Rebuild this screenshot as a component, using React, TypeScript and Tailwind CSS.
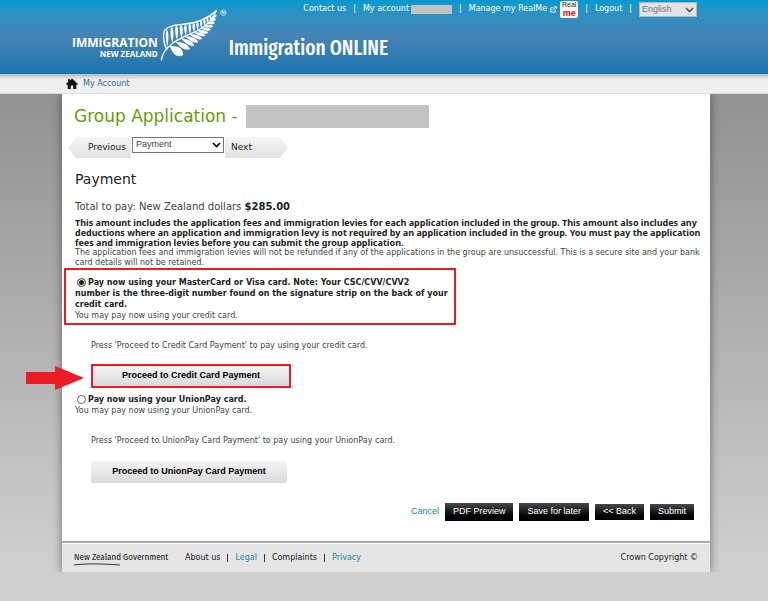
import React, { useState } from 'react';

const verdana = "font-['Verdana','DejaVu_Sans',sans-serif]";
const arial = "font-['Arial','Liberation_Sans',sans-serif]";

// === Logo ===
// Each frond: [x1, y1, x2, y2, width]
const upperFronds = [
  [37, 126, 36, 72, 8],
  [52, 114, 50, 64, 9],
  [66, 106, 64, 60, 9],
  [80, 99, 78, 58, 9],
  [92, 93, 91, 57, 8],
  [105, 87, 104, 55, 8],
  [117, 81, 116, 53, 8],
  [128, 75, 127, 50, 7],
  [139, 69, 138, 46, 7],
  [149, 62, 148, 42, 7],
  [158, 54, 157, 37, 6],
  [167, 45, 166, 31, 6],
];

const lowerFronds = [
  [44, 123, 84, 151, 25],
  [62, 110, 105, 133, 16],
  [78, 100, 118, 122, 13],
  [91, 94, 130, 112, 12],
  [103, 88, 142, 102, 11],
  [115, 82, 152, 92, 10],
  [126, 77, 160, 83, 10],
  [137, 70, 168, 74, 9],
  [147, 63, 175, 64, 9],
  [156, 55, 180, 53, 9],
  [164, 47, 183, 42, 9],
  [172, 38, 185, 31, 8],
];

function leaf([x1, y1, x2, y2, w]: number[]) {
  const dx = x2 - x1;
  const dy = y2 - y1;
  const len = Math.hypot(dx, dy);
  const nx = (-dy / len) * w;
  const ny = (dx / len) * w;
  const mx = x1 + dx * 0.7;
  const my = y1 + dy * 0.7;
  return `M${x1} ${y1} Q${mx + nx} ${my + ny} ${x2} ${y2} Q${mx - nx} ${my - ny} ${x1} ${y1} Z`;
}

function FernLogo() {
  return (
    <svg viewBox="15 9 204 159" className="h-[53px] w-[68px]" role="img" aria-label="Silver fern">
      <path
        d="M19 166 C21 145 32 130 55 113 C80 97 105 88 130 75 C155 62 174 42 184 17"
        fill="none"
        stroke="white"
        strokeWidth="4"
      />
      <path
        d="M34 131 C26 118 23 88 29 76 C36 66 55 60 80 58 C120 56 158 42 185 16"
        fill="none"
        stroke="white"
        strokeWidth="4"
      />
      <g fill="white">
        {upperFronds.map((f, i) => <path key={i} d={leaf(f)} />)}
        {lowerFronds.map((f, i) => <path key={i} d={leaf(f)} />)}
      </g>
      <g fill="none" stroke="white" strokeWidth="2">
        <circle cx="205" cy="23" r="8" />
        <path d="M200 20 H204 M202 20 V26 M205 26 V20 L207.5 24 L210 20 V26" />
      </g>
    </svg>
  );
}

// === Icons ===
function ExternalIcon() {
  return (
    <svg viewBox="0 0 8 8" className="size-[7px]" fill="none" stroke="white" aria-hidden="true">
      <path d="M4 2 H1 V7 H6 V4.5 M3 5 L7 1 M4.5 0.8 H7.2 V3.5" />
    </svg>
  );
}

function HomeIcon() {
  return (
    <svg viewBox="0 0 12 11" className="h-[11px] w-3" fill="#111" aria-hidden="true">
      <path d="M6 0.5 L12 6 L11 7 L10.3 6.4 V11 H7.2 V7.5 H4.8 V11 H1.7 V6.4 L1 7 L0 6 L2 4.1 V1 H3.7 V2.6 Z" />
    </svg>
  );
}

function Chevron({ className }: { className: string }) {
  return (
    <svg
      viewBox="0 0 9 6"
      className={`pointer-events-none absolute top-[5px] right-[3px] h-[6px] w-[9px] ${className}`}
      fill="none"
      stroke="currentColor"
      strokeWidth="1.6"
      aria-hidden="true"
    >
      <path d="M1 1 L4.5 4.5 L8 1" />
    </svg>
  );
}

function Arrow() {
  return (
    <svg viewBox="0 0 58 24" className="absolute top-[2px] -left-[65px] h-6 w-[58px]" fill="#ed1c24" aria-hidden="true">
      <path d="M0 6 H29 V0 L58 12 L29 24 V18 H0 Z" />
    </svg>
  );
}

// === Header ===
function Header() {
  return (
    <header className="h-[74px] bg-linear-to-b from-[#0099cf] via-[#4583b3] to-[#1674af] pr-[71px] pl-[72px] text-white">
      <nav className="flex h-[18px] items-center justify-end text-[8px] whitespace-nowrap">
        <a href="#contact">Contact us</a>
        <span className="px-[7px]">|</span>
        <a href="#account">My account</a>
        <span className="ml-[2px] h-[9px] w-[41px] bg-[#c3c3c3]" />
        <span className="px-[7px]">|</span>
        <a href="#realme" className="flex items-center gap-[3px]">
          Manage my RealMe
          <ExternalIcon />
          <span className={`flex h-[17px] w-[18px] flex-col items-center rounded-xs bg-white text-[#222] ${arial}`}>
            <span className="text-[7px] leading-[8px]">Real</span>
            <span className="text-[9px] leading-[8px] font-bold text-[#f00000]">me</span>
          </span>
        </a>
        <span className="px-[7px]">|</span>
        <a href="#logout">Logout</a>
        <span className="px-[7px]">|</span>
        <div className="relative flex">
          <select
            aria-label="Language"
            className={`h-[15px] w-[58px] appearance-none border border-[#b5b5b5] bg-[#e3e3e3] pl-[2px] text-[9px] text-[#777] ${arial}`}
          >
            <option>English</option>
          </select>
          <Chevron className="text-[#555]" />
        </div>
      </nav>
      <div className="flex items-start">
        <div className="pt-[18px] text-right font-['Open_Sans','Noto_Sans',sans-serif] font-bold">
          <div className="text-[12px] leading-[13px]">IMMIGRATION</div>
          <div className="text-[8px] leading-[9px]">NEW ZEALAND</div>
        </div>
        <div className="-mt-[10px] ml-[2px]">
          <FernLogo />
        </div>
        <div className="pt-4 pl-px font-['Fira_Sans_Extra_Condensed','Fira_Sans_Condensed','Roboto_Condensed','Liberation_Sans_Narrow',sans-serif] text-[21px] leading-7 font-medium whitespace-nowrap">
          Immigration ONLINE
        </div>
      </div>
    </header>
  );
}

function StepNav() {
  return (
    <div className="-ml-[6px] flex items-start gap-px">
      <button className="h-[21px] w-[63px] bg-linear-to-b from-[#f5f5f5] to-[#e2e2e2] pr-[5px] text-right text-[9px] text-[#222] [clip-path:polygon(8px_0,100%_0,100%_100%,8px_100%,0_50%)]">
        Previous
      </button>
      <div className="relative flex">
        <select
          aria-label="Step"
          className={`h-4 w-[92px] appearance-none border border-[#777] bg-white pl-[3px] text-[9px] ${arial}`}
        >
          <option>Payment</option>
        </select>
        <Chevron className="text-black" />
      </div>
      <button className="h-[21px] w-[63px] bg-linear-to-b from-[#f5f5f5] to-[#e2e2e2] pl-[6px] text-left text-[9px] text-[#222] [clip-path:polygon(0_0,calc(100%-8px)_0,100%_50%,calc(100%-8px)_100%,0_100%)]">
        Next
      </button>
    </div>
  );
}

// === Payment options ===
function RadioOption({ id, checked, onSelect, note, children }: any) {
  return (
    <div className="text-[8px] leading-[11px]">
      <input
        id={id}
        type="radio"
        name="method"
        checked={checked}
        onChange={onSelect}
        className="mr-[2px] ml-[2px] size-[9px] appearance-none rounded-full border border-[#666] bg-white align-middle checked:bg-[#222] checked:shadow-[inset_0_0_0_1px_white]"
      />
      <label htmlFor={id} className="font-bold text-[#222]">{children}</label>
      <p>{note}</p>
    </div>
  );
}

const proceedStyle = `block bg-linear-to-b from-[#f5f5f5] to-[#dadada] text-[9px] font-bold text-black ${arial}`;
const darkStyle = `bg-linear-to-b from-[#4a4a4a] to-black px-2 text-[9px] text-white ${arial}`;

function Footer() {
  return (
    <footer className="flex h-[29px] items-center border-t border-white px-3 text-[8px] text-[#222]">
      <div className="relative w-[91px] font-['Fira_Sans_Condensed','Lato',sans-serif] text-[9px] whitespace-nowrap">
        New Zealand Government
        <svg viewBox="0 0 46 3" className="absolute -bottom-px left-0 h-[3px] w-[46px]" fill="none" stroke="#333" aria-hidden="true">
          <path d="M0 2 C12 0.5 25 0.5 46 2" />
        </svg>
      </div>
      <nav className="ml-5 flex items-center">
        <a href="#about">About us</a>
        <span className="mx-[7px] h-2 w-px bg-[#333]" />
        <a href="#legal" className="text-[#2483a8]">Legal</a>
        <span className="mx-[7px] h-2 w-px bg-[#333]" />
        <a href="#complaints">Complaints</a>
        <span className="mx-[7px] h-2 w-px bg-[#333]" />
        <a href="#privacy" className="text-[#2483a8]">Privacy</a>
      </nav>
      <span className="ml-auto">Crown Copyright ©</span>
    </footer>
  );
}

// === App Component ===
export default function App() {
  const [method, setMethod] = useState('card');

  return (
    <div className={`min-h-screen bg-linear-to-b from-[#868686] to-[#cfcfcf] to-[560px] text-[#444] ${verdana}`}>
      <Header />
      <div className="flex h-5 items-center gap-[5px] border-b border-[#dcdcdc] bg-linear-to-b from-[#bbb] to-[#efefef] to-30% px-[66px] text-[8px]">
        <HomeIcon />
        <a href="#home" className="text-[#1f7094]">My Account</a>
      </div>

      <div className="mr-[58px] ml-[62px] bg-[#e5e5e5] shadow-[0_0_9px_rgba(0,0,0,0.45)] [clip-path:inset(0_-12px_0_-40px)]">
        <main className="border-b-2 border-[#aaa] bg-white pr-[6px] pb-5 pl-3">
          <h1 className="flex items-center gap-2 pt-[10px] text-[17px] leading-6 text-[#6a9b0c]">
            Group Application -
            <span className="h-[23px] w-[183px] bg-[#c3c3c3]" />
          </h1>
          <div className="mt-[9px]">
            <StepNav />
          </div>
          <h2 className="mt-[11px] ml-px text-[14px] leading-5 text-[#222]">Payment</h2>
          <p className="mt-[10px] ml-px text-[10px] leading-4">
            Total to pay: New Zealand dollars <b className="text-[#222]">$285.00</b>
          </p>
          <div className="mt-[3px] ml-px leading-[10px]">
            <p className="font-['Noto_Sans',sans-serif] text-[9px] font-bold text-[#222]">
              This amount includes the application fees and immigration levies for each application included in the group. This amount also includes any
              deductions where an application and immigration levy is not required by an application included in the group. You must pay the application
              fees and immigration levies before you can submit the group application.
            </p>
            <p className="text-[8px]">
              The application fees and immigration levies will not be refunded if any of the applications in the group are unsuccessful. This is a
              secure site and your bank card details will not be retained.
            </p>
          </div>

          <div className="-ml-[10px] w-[392px] border-2 border-[#ed1c24] pt-[7px] pb-[2px] pl-[9px]">
            <RadioOption
              id="card"
              checked={method === 'card'}
              onSelect={() => setMethod('card')}
              note="You may pay now using your credit card."
            >
              Pay now using your MasterCard or Visa card. Note: Your CSC/CVV/CVV2
              <br />
              number is the three-digit number found on the signature strip on the back of your
              <br />
              credit card.
            </RadioOption>
          </div>
          <p className="mt-[15px] ml-[17px] text-[8px] leading-[11px]">
            Press 'Proceed to Credit Card Payment' to pay using your credit card.
          </p>
          <div className="relative mt-[13px] ml-[17px] w-fit">
            <Arrow />
            <button className={`${proceedStyle} h-6 w-[200px] border-2 border-[#ed1c24]`}>Proceed to Credit Card Payment</button>
          </div>

          <div className="mt-[6px] ml-px">
            <RadioOption
              id="union"
              checked={method === 'union'}
              onSelect={() => setMethod('union')}
              note="You may pay now using your UnionPay card."
            >
              Pay now using your UnionPay card.
            </RadioOption>
          </div>
          <p className="mt-[19px] ml-[17px] text-[8px] leading-[11px]">
            Press 'Proceed to UnionPay Card Payment' to pay using your UnionPay card.
          </p>
          <button className={`${proceedStyle} mt-[15px] ml-[17px] h-[22px] w-[196px] rounded-xs`}>Proceed to UnionPay Card Payment</button>

          <div className="mt-5 flex items-center justify-end gap-[6px] pr-[10px]">
            <a href="#cancel" className={`text-[9px] text-[#2483a8] ${arial}`}>Cancel</a>
            <button className={`${darkStyle} h-[18px]`}>PDF Preview</button>
            <button className={`${darkStyle} h-[18px]`}>Save for later</button>
            <button className={`${darkStyle} h-4`}>&lt;&lt; Back</button>
            <button className={`${darkStyle} h-4`}>Submit</button>
          </div>
        </main>
        <Footer />
      </div>
    </div>
  );
}
